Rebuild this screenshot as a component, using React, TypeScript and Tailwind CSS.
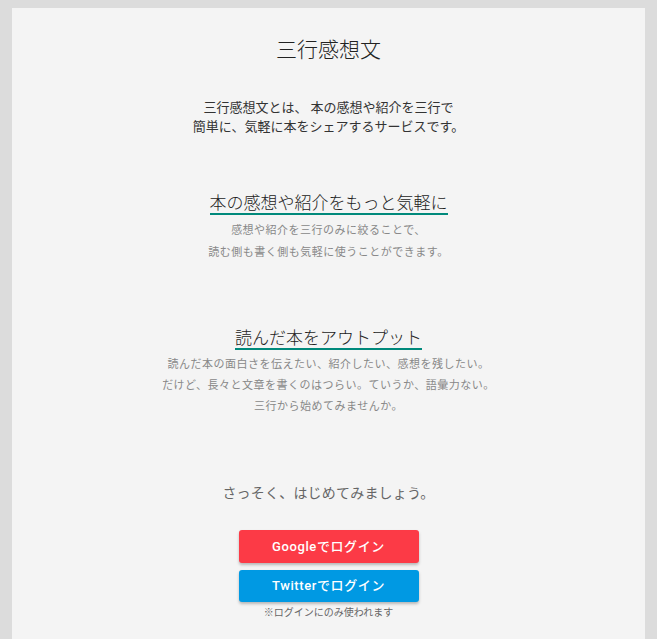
const font = { fontFamily: 'Roboto, "Noto Sans CJK JP", sans-serif' };

function Feature({ title, lines }: { title: string; lines: string[] }) {
  return (
    <section className="flex flex-col items-center">
      <h2 className="border-b-2 border-[#00897b] text-[17px] font-light leading-[20px] text-[#222]">{title}</h2>
      <div className="mt-[5px] text-center text-[11px] leading-[22px] tracking-[0.5px] text-[#888]">
        {lines.map((l) => (
          <p key={l}>{l}</p>
        ))}
      </div>
    </section>
  );
}

export default function App() {
  return (
    <div className="min-h-screen bg-[#dcdcdc] px-3 pt-2" style={font}>
      <main className="flex min-h-[700px] flex-col items-center bg-[#f4f4f4] pt-[27px]">
        <h1 className="text-[21px] font-light leading-[30px] text-[#222]">三行感想文</h1>

        <div className="mt-[33px] text-center text-[13px] leading-[19px] text-[#333]">
          <p>三行感想文とは、 本の感想や紹介を三行で</p>
          <p>簡単に、気軽に本をシェアするサービスです。</p>
        </div>

        <div className="mt-[57px]">
          <Feature
            title="本の感想や紹介をもっと気軽に"
            lines={["感想や紹介を三行のみに絞ることで、", "読む側も書く側も気軽に使うことができます。"]}
          />
        </div>

        <div className="mt-[64px] [&_div]:mt-[4px] [&_div]:leading-[21px]">
          <Feature
            title="読んだ本をアウトプット"
            lines={[
              "読んだ本の面白さを伝えたい、紹介したい、感想を残したい。",
              "だけど、長々と文章を書くのはつらい。ていうか、語彙力ない。",
              "三行から始めてみませんか。",
            ]}
          />
        </div>

        <p className="mt-[66px] text-[14px] leading-[20px] tracking-[0.2px] text-[#666]">さっそく、はじめてみましょう。</p>

        <div className="mt-[27px] flex flex-col gap-[7px]">
          <button className="h-[33px] w-[180px] rounded-[3px] bg-[#fc3a46] text-[13px] font-medium tracking-[0.6px] text-white shadow-[0_2px_3px_rgba(0,0,0,0.25)]">
            Googleでログイン
          </button>
          <button className="h-[32px] w-[180px] rounded-[3px] bg-[#0099e3] text-[13px] font-medium tracking-[0.6px] text-white shadow-[0_2px_3px_rgba(0,0,0,0.25)]">
            Twitterでログイン
          </button>
        </div>
        <p className="mt-[4px] text-[10px] leading-[14px] text-[#666]">※ログインにのみ使われます</p>
      </main>
    </div>
  );
}
